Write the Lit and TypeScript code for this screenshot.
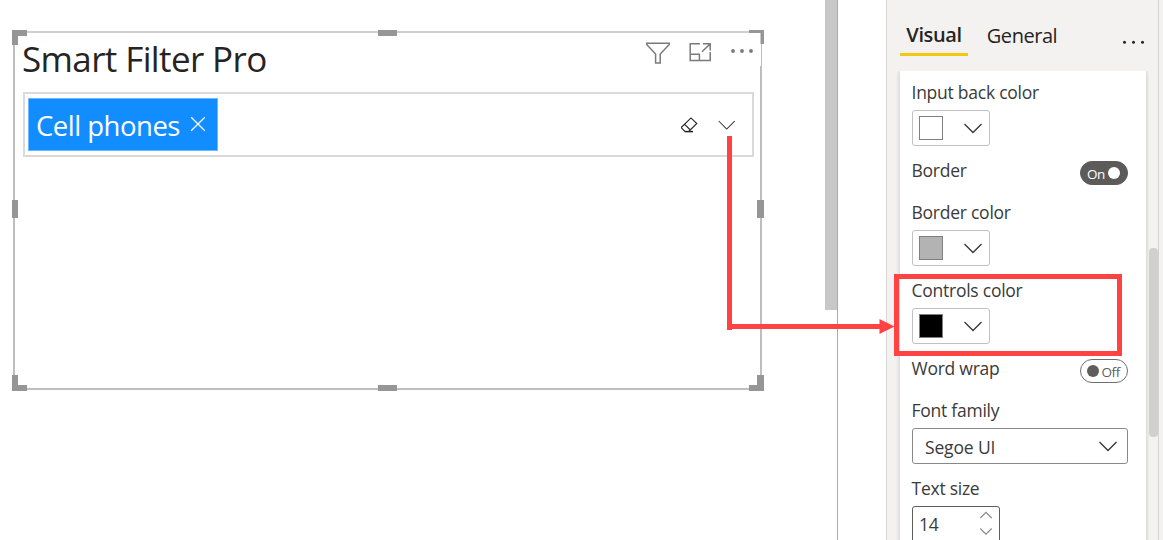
import { LitElement, html, css, svg } from "lit";
import { customElement, property } from "lit/decorators.js";
import { styleMap } from "lit/directives/style-map.js";

const chevron = html`<svg width="20" height="12" viewBox="0 0 20 12" fill="none" stroke="#3b3a39" stroke-width="1.4">
  <path d="M1.5 2 L10 10.5 L18.5 2" />
</svg>`;

@customElement("color-picker")
class ColorPicker extends LitElement {
  @property() color = "#fff";
  static styles = css`
    :host { display: block; }
    .box {
      box-sizing: border-box; width: 78px; height: 36px; padding: 0 6px;
      border: 1px solid #c2c0be; border-radius: 3px; background: #fff;
      display: flex; align-items: center; justify-content: space-between;
    }
    .swatch { box-sizing: border-box; width: 24px; height: 24px; border: 1px solid #7f7f7f; }
    svg { display: block; }
  `;
  render() {
    return html`<div class="box">
      <div class="swatch" style=${styleMap({ background: this.color })}></div>
      ${chevron}
    </div>`;
  }
}

@customElement("toggle-switch")
class ToggleSwitch extends LitElement {
  @property({ type: Boolean }) on = false;
  static styles = css`
    :host { display: block; }
    .pill {
      box-sizing: border-box; width: 48px; height: 24px; border-radius: 12px;
      border: 1px solid #706e6c; display: flex; align-items: center;
      font: 13.5px/22px "Open Sans", sans-serif; letter-spacing: -0.4px;
      color: #605e5c; padding: 0 6px; gap: 2.5px; background: #fff;
    }
    .on { background: #5d5b59; border-color: #5d5b59; color: #fff; gap: 3px; }
    .knob { width: 12px; height: 12px; border-radius: 50%; background: #605e5c; flex: none; }
    .on .knob { background: #fff; }
    .word { padding-top: 2px; }
  `;
  render() {
    return this.on
      ? html`<div class="pill on"><span class="word">On</span><span class="knob"></span></div>`
      : html`<div class="pill"><span class="knob"></span><span class="word">Off</span></div>`;
  }
}

@customElement("filter-visual")
class FilterVisual extends LitElement {
  static styles = css`
    :host { display: block; }
    .frame {
      box-sizing: border-box; width: 749px; height: 359px; position: relative;
      border: 2px solid #bebebe; border-top-color: #cfcfcf; background: #fff; padding: 0 6px 0 8px;
    }
    .handles { position: absolute; left: -3px; top: -3px; }
    .head { display: flex; justify-content: space-between; height: 59px; }
    .title { font: 35px/52px "Open Sans", sans-serif; color: #252423; letter-spacing: -0.62px; white-space: nowrap; margin-left: -1px; }
    .tools { display: flex; padding-top: 7px; }
    .input {
      box-sizing: border-box; height: 65px; border: 2px solid #dadada;
      display: flex; align-items: center; padding: 0 17px 0 3px;
    }
    .chip {
      box-sizing: border-box; width: 190px; height: 53px; background: #118dff; border: 1px solid #6db9ff;
      color: #fff; display: flex; align-items: center; padding: 2px 11px 0 7px; justify-content: space-between;
    }
    .chiptext { font: 27.5px/50px "Open Sans", sans-serif; letter-spacing: -0.5px; white-space: nowrap; }
    .chip svg { margin-top: -3px; }
    .space { flex: 1; }
    .chev { margin-left: 20px; }
    svg { display: block; }
  `;
  render() {
    const corners = ["M0 0H15V6H6V15H0Z", "M737 0H752V14H748.5V3H737Z", "M0 345H6V355H15V361H0Z", "M745 345H752V361H737V355H745Z",
      "M366 0H385V6H366Z", "M366 355H385V361H366Z", "M0 170H6V188H0Z", "M745 170H752V188H745Z"];
    return html`<div class="frame">
      <svg class="handles" width="752" height="361" fill="#969696"><path d="M748 3H749V36H748Z" fill="#fff" />${corners.map((d) => svg`<path d=${d} />`)}</svg>
      <div class="head">
        <div class="title">Smart Filter Pro</div>
        <div class="tools">
          <svg width="110" height="28" viewBox="644 40 110 28" fill="none" stroke="#7b7a79" stroke-width="1.5">
            <path d="M646.7 43.2H669.3V44.5L660.2 54V63H655.6V54L646.7 44.5Z" />
            <path d="M700 43.8H690.2V60.4H710.2V52 M690.2 54.3H699.4V60.4 M703 43.8H710.2V50.5 M710 44L702 51.8" />
            <g fill="#7b7a79" stroke="none"><circle cx="733" cy="51" r="1.9" /><circle cx="742" cy="51" r="1.9" /><circle cx="751" cy="51" r="1.9" /></g>
          </svg>
        </div>
      </div>
      <div class="input">
        <div class="chip">
          <span class="chiptext">Cell phones</span>
          <svg width="16" height="16" viewBox="0 0 16 16" fill="none" stroke="#fff" stroke-width="1.3"><path d="M1.2 1.2L14.8 14.8M14.8 1.2L1.2 14.8" /></svg>
        </div>
        <div class="space"></div>
        <svg width="18" height="16" viewBox="0 0 18 16" fill="none" stroke="#222" stroke-width="1.1">
          <path d="M1.2 10.5L11 .9L16.8 6.5L8.8 14.5H4.9L1.2 10.7M4.6 7.4L10.4 13" /><path d="M4.8 14.6H13" stroke-width="1.5" />
        </svg>
        <svg class="chev" width="17" height="10" viewBox="0 0 17 10" fill="none" stroke="#333" stroke-width="1.05"><path d="M.7 1L8.7 9L16.7 1" /></svg>
      </div>
    </div>`;
  }
}

@customElement("format-pane")
class FormatPane extends LitElement {
  static styles = css`
    :host { display: block; font-family: "Open Sans", sans-serif; }
    .pane {
      box-sizing: border-box; width: 273px; height: 540px; background: #f3f2f1; overflow: hidden;
      border-left: 1px solid #d9d8d7; border-right: 1px solid #d5d4d3;
      display: grid; grid-template: 71px 1fr / 13px 246px 3px 9px;
    }
    .tabs { grid-column: 2 / 5; display: flex; align-items: flex-start; color: #252423; font-size: 20px; white-space: nowrap; }
    .tab { line-height: 28px; padding-top: 21px; height: 32px; text-align: center; }
    .visual { width: 68px; font-weight: 600; letter-spacing: -0.4px; border-bottom: 3px solid #f2c811; }
    .general { margin-left: 18px; padding-top: 22px; letter-spacing: -0.45px; width: 72px; }
    .more { margin: 39px 0 0 64px; display: block; }
    .card {
      grid-column: 2; box-sizing: border-box; background: #fff; padding: 9px 18px 0 12px;
      box-shadow: 0 0 5px rgba(0, 0, 0, 0.2); clip-path: inset(0 -3px 0 -4px);
      color: #3b3a39; font-size: 17.5px; line-height: 24px; letter-spacing: -0.25px;
    }
    .field { display: flex; flex-direction: column; gap: 6px; margin-bottom: 12px; }
    .field > span, .row > span { margin-left: -0.5px; }
    .row { display: flex; justify-content: space-between; height: 30px; margin-bottom: 12px; white-space: nowrap; }
    .row toggle-switch { margin-top: 3px; }
    .select, .spin {
      box-sizing: border-box; height: 36px; border: 1px solid #8a8886; border-radius: 3px;
      display: flex; align-items: center; justify-content: space-between; padding: 0 9px 0 12px;
    }
    .select span { letter-spacing: -0.15px; padding-top: 1px; }
    .spin { width: 88px; border-color: #5f5d5b; padding: 0 6px 0 6px; height: 40px; align-items: flex-start; }
    .num { line-height: 34px; }
    .spin svg { margin-top: 4px; }
    .scroll { grid-column: 4; padding-top: 177px; }
    .thumb { height: 189px; border-radius: 4px; background: #d2d0ce; }
  `;
  render() {
    return html`<div class="pane">
      <div class="tabs">
        <div class="tab visual">Visual</div>
        <div class="tab general">General</div>
        <svg class="more" width="24" height="6" fill="#252423"><circle cx="2.5" cy="3.2" r="1.5" /><circle cx="11.5" cy="3.2" r="1.5" /><circle cx="20.5" cy="3.2" r="1.5" /></svg>
      </div>
      <div class="card">
        <div class="field"><span>Input back color</span><color-picker color="#fff"></color-picker></div>
        <div class="row"><span>Border</span><toggle-switch on></toggle-switch></div>
        <div class="field"><span>Border color</span><color-picker color="#b3b3b3"></color-picker></div>
        <div class="field"><span>Controls color</span><color-picker color="#000"></color-picker></div>
        <div class="row"><span>Word wrap</span><toggle-switch></toggle-switch></div>
        <div class="field"><span>Font family</span><div class="select"><span>Segoe UI</span>${chevron}</div></div>
        <div class="field"><span>Text size</span>
          <div class="spin"><span class="num">14</span>
            <svg width="14" height="26" viewBox="0 0 14 26" fill="none" stroke="#8a8886" stroke-width="1.1"><path d="M1.3 7L7 1.3L12.7 7M1.3 17.5L7 23.2L12.7 17.5" /></svg>
          </div>
        </div>
      </div>
      <div class="scroll"><div class="thumb"></div></div>
    </div>`;
  }
}

@customElement("app-root")
class AppRoot extends LitElement {
  static styles = css`
    :host { display: block; }
    .page { position: relative; width: 1163px; height: 540px; overflow: hidden; background: #fff; display: flex; }
    .canvas { width: 825px; box-sizing: border-box; padding: 31px 0 0 13px; }
    .gutter { box-sizing: border-box; width: 13px; border-right: 1px solid #ababab; margin-right: 48px; }
    .bar { height: 310px; background: #c8c8c8; }
    .edge { flex: 1; background: #f3f2f1; }
    .callout { position: absolute; left: 0; top: 0; }
  `;
  render() {
    return html`<div class="page">
      <div class="canvas"><filter-visual></filter-visual></div>
      <div class="gutter"><div class="bar"></div></div>
      <format-pane></format-pane>
      <div class="edge"></div>
      <svg class="callout" width="1163" height="540" fill="none" stroke="#ff4343" stroke-width="5">
        <path d="M729.5 136V330M729.5 326.5H881" />
        <path d="M879.5 319V334L894.5 326.5Z" fill="#ff4343" stroke="none" />
        <rect x="896.5" y="276.5" width="223" height="77" />
      </svg>
    </div>`;
  }
}
